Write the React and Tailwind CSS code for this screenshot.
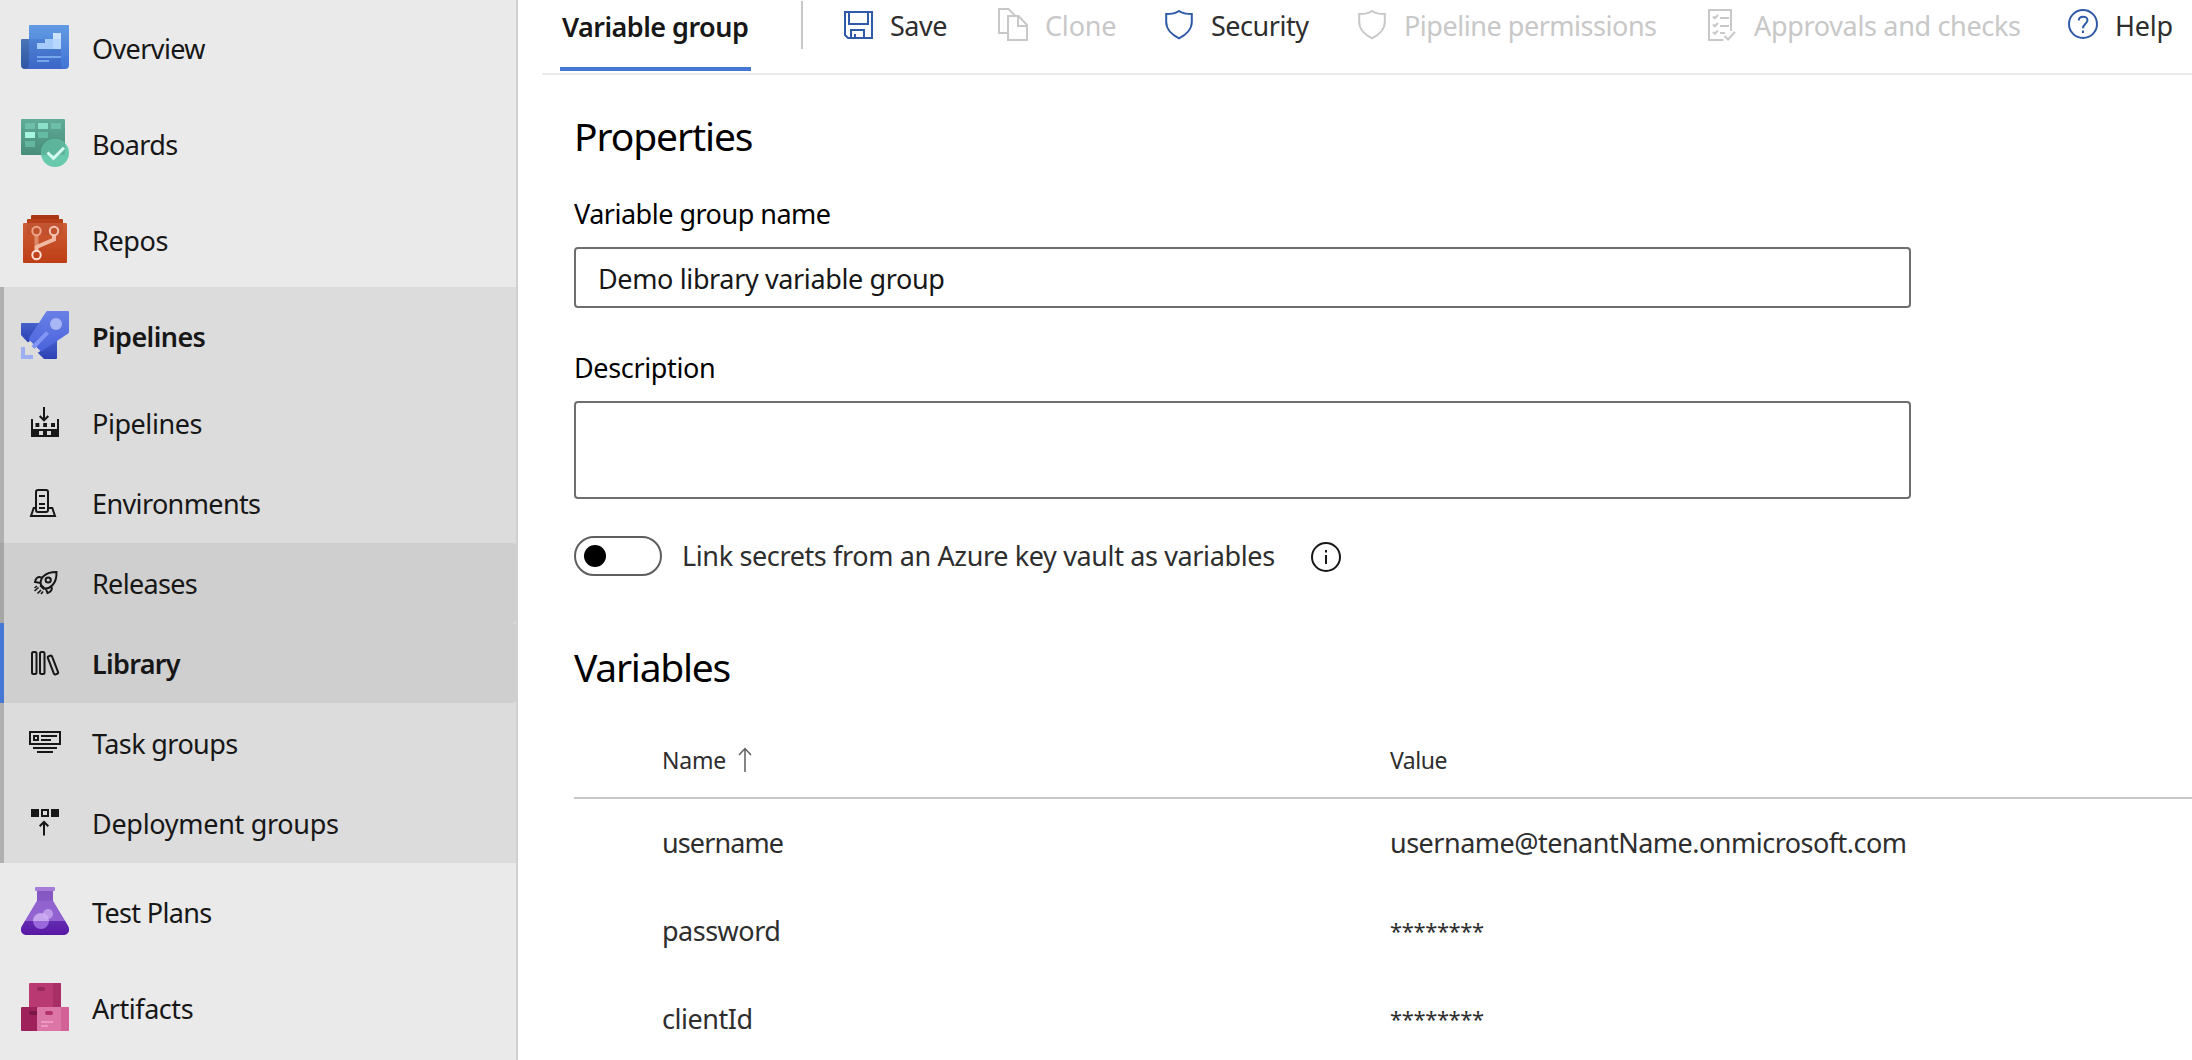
import React from 'react';

/* ---------- Service icons (48 x 48) ---------- */

const Grad = ({ id, from, to }) => (
  <linearGradient id={id} x1="0" y1="0" x2="0" y2="1">
    <stop offset="0" stopColor={from} />
    <stop offset="1" stopColor={to} />
  </linearGradient>
);

const Big = ({ children }) => (
  <svg width="48" height="48" viewBox="0 0 48 48" fill="none" className="shrink-0">
    {children}
  </svg>
);

const OverviewIcon = () => (
  <Big>
    <defs>
      <Grad id="ov1" from="#629be2" to="#3f74d6" />
      <Grad id="ov2" from="#4a75b8" to="#2e55a3" />
      <Grad id="ov3" from="#4d82d2" to="#3c66c8" />
    </defs>
    <path d="M0 17a1 1 0 0 1 1-1h8v26a4 4 0 0 1-4 4H4a4 4 0 0 1-4-4z" fill="url(#ov2)" />
    <path d="M8 3a1 1 0 0 1 1-1h38a1 1 0 0 1 1 1v39a4 4 0 0 1-4 4H4a4 4 0 0 0 4-4z" fill="url(#ov1)" />
    <path d="M8 16h32v26a4 4 0 0 0 4 4H4a4 4 0 0 0 4-4z" fill="url(#ov3)" />
    <path d="M16 20h8v-4h8v10H16z" fill="#a5cbfb" />
    <path d="M32 10h8v16h-8z" fill="#b8d7ff" />
    <path d="M32 10h8v6h-8z" fill="#cde2ff" />
    <path d="M16 33h24v2H16zM16 37h12v2H16z" fill="#76a6ec" />
  </Big>
);

const BoardsIcon = () => (
  <Big>
    <defs>
      <Grad id="bo1" from="#60ab99" to="#488d79" />
    </defs>
    <rect width="44" height="36" rx="1" fill="url(#bo1)" />
    <path d="M4 4h10v6H4zM30 4h10v6H30z" fill="#6cc0a9" />
    <path d="M17 4h10v6H17z" fill="#8ce0c9" />
    <path d="M4 13h10v6H4z" fill="#a5f6e0" />
    <path d="M17 13h10v6H17z" fill="#65baa2" />
    <path d="M4 22h10v6H4z" fill="#62b69e" />
    <circle cx="34" cy="34" r="14" fill="#68c9ad" />
    <path d="M44 24.2V35a1 1 0 0 1-1 1H20.2A14 14 0 0 1 44 24.2z" fill="#5cb59b" />
    <path d="M26.5 33.5l6 5.8L43 28.8" stroke="#d5fbf0" strokeWidth="3" />
  </Big>
);

const ReposIcon = () => (
  <Big>
    <defs>
      <Grad id="re1" from="#cd5f38" to="#be3d15" />
    </defs>
    <rect x="10" width="28" height="10" rx="1" fill="#a93713" />
    <rect x="6" y="4" width="36" height="10" rx="1" fill="#b5401a" />
    <rect x="2" y="8" width="44" height="40" rx="1" fill="url(#re1)" />
    <path d="M6 8h36v12H6z" fill="#b94a2c" fillOpacity=".45" />
    <path d="M15.5 20v10" stroke="#dd8a69" strokeWidth="4" />
    <path d="M33 20v4.500L15.5 32v4.500" stroke="#f1b9a2" strokeWidth="4" />
    <circle cx="15.5" cy="16" r="4.2" stroke="#eda488" strokeWidth="2" />
    <circle cx="33" cy="16" r="4.2" stroke="#f5c6b4" strokeWidth="2" />
    <circle cx="15.5" cy="40" r="4.2" stroke="#fde0d5" strokeWidth="2" />
  </Big>
);

const PipelinesIcon = () => (
  <Big>
    <defs>
      <Grad id="pi1" from="#6980e6" to="#4a63dc" />
      <Grad id="pi2" from="#4561cb" to="#2d40b4" />
    </defs>
    <path d="M1 12h18L8 31H6.5L0 24V13a1 1 0 0 1 1-1z" fill="url(#pi2)" />
    <path d="M36 28v19a1 1 0 0 1-1 1H23l-7-7 2-3z" fill="url(#pi2)" />
    <path d="M26 0h21a1 1 0 0 1 1 1v20a2 2 0 0 1-.8 1.5L21 40h-2L8 29v-2L25 1z" fill="url(#pi1)" />
    <path d="M8.5 29.5l11 10.5-3 2-1.5-2 1-1.5-2-.5-2-1-1.5-1 .5-2-2-.5.5-2z" fill="#dcdcdc" />
    <circle cx="35" cy="13" r="6" fill="#a8b6f4" />
    <path d="M26.5 21.5L12 36.5" stroke="#8195f2" strokeWidth="4" />
    <path d="M2 36v10h10" stroke="#9daff1" strokeWidth="4" />
  </Big>
);

const TestPlansIcon = () => (
  <Big>
    <defs>
      <Grad id="te1" from="#8456c2" to="#8f63cd" />
      <Grad id="te2" from="#632bb2" to="#5817a3" />
    </defs>
    <path d="M16 4h16v10l15 25c2.5 4.5.2 9-5 9H6c-5.2 0-7.5-4.5-5-9l15-25z" fill="url(#te1)" />
    <path d="M16 14h16l12 20H4z" fill="#9263d0" />
    <path d="M4 34h40l3 5c2.5 4.5.2 9-5 9H6c-5.2 0-7.5-4.5-5-9z" fill="url(#te2)" />
    <rect x="14" width="20" height="4" rx="1" fill="#a67cd9" />
    <circle cx="20" cy="34" r="8" fill="#9a68dc" />
    <path d="M12 34a8 8 0 0 1 16 0z" fill="#c6a5ef" />
    <circle cx="27" cy="27" r="5" fill="#d0b2f3" fillOpacity=".7" />
  </Big>
);

const ArtifactsIcon = () => (
  <Big>
    <rect x="8" width="32" height="26" rx="1" fill="#b93a72" />
    <path d="M32 0h7a1 1 0 0 1 1 1v23h-8z" fill="#a82f66" />
    <rect y="24" width="20" height="24" rx="1" fill="#9f215b" />
    <rect x="16" y="24" width="32" height="24" rx="1" fill="#db76a6" />
    <path d="M40 24h7a1 1 0 0 1 1 1v22a1 1 0 0 1-1 1h-7z" fill="#d16197" />
    <rect x="16" y="4" width="8" height="4" rx="2" fill="#98285a" />
    <path d="M10 28h6v4h-6a2 2 0 0 1 0-4z" fill="#7a1745" />
    <rect x="24" y="28" width="8" height="4" rx="2" fill="#b4326c" />
    <path d="M20 38h12v2H20zM20 42h7v2h-7z" fill="#ec98c0" />
  </Big>
);

/* ---------- Sub-navigation icons (32 x 32) ---------- */

const Small = ({ children }) => (
  <svg width="32" height="32" viewBox="0 0 32 32" fill="none" stroke="#171717" strokeWidth="2" className="shrink-0">
    {children}
  </svg>
);

const BuildIcon = () => (
  <Small>
    <path d="M15 0v13M10.7 9l4.3 4.3L19.3 9" />
    <path
      d="M2 12h2v10h24V12h2v18H2zM10 24v4h4v-4zM18 24v4h4v-4zM6.500 16h3.800v4H6.500zM14.200 16h3.800v4h-3.800zM22 16h4v4h-4z"
      fill="#171717"
      fillRule="evenodd"
      stroke="none"
    />
  </Small>
);

const EnvironmentsIcon = () => (
  <Small>
    <rect x="7" y="3" width="12" height="22" rx="2" />
    <path d="M10 9h6M10 17h6M10 21h6M7 21H4.700L2 29h24l-2.700-8H19" />
  </Small>
);

const ReleasesIcon = () => (
  <Small>
    <path d="M12 18c-1.500-5 2-13 15.500-13C28 18 20 22 15.500 21.500zM12.500 10.500c-3.500-1.500-6 .5-6.500 4.500l5.500 1M22.500 19.500c1 3-.5 5.500-4 6.500L16.500 21" />
    <circle cx="19.200" cy="13" r="2.600" />
    <path d="M11 18.500l4 4M9.500 20.500L5.500 24M12 23l-3.500 3.500M8 19l-2.500 2M14 24.500L12 27" strokeWidth="1.600" />
  </Small>
);

const LibraryIcon = () => (
  <Small>
    <rect x="3" y="5" width="4.500" height="22" rx="1.500" />
    <rect x="11" y="5" width="4.500" height="22" rx="1.500" />
    <rect x="21.700" y="8.300" width="4.500" height="19.400" rx="1.500" transform="rotate(-21 24 18)" />
  </Small>
);

const TaskGroupsIcon = () => (
  <Small>
    <path d="M1 5h30v12H1zM5 9h4v4H5zM12 9h16M12 13h10M4 21h24M8 25h16" />
  </Small>
);

const DeploymentIcon = () => (
  <Small>
    <path d="M2 2h8v8H2zM22 2h8v8h-8z" fill="#171717" stroke="none" />
    <path d="M13 3h6v6h-6zM15 28.500V15M10.700 19.300L15 15l4.300 4.300" />
  </Small>
);

/* ---------- Toolbar icons ---------- */

const Tool = ({ children, color }) => (
  <svg width="32" height="44" viewBox="0 3 32 44" fill="none" stroke={color} strokeWidth="2" className="shrink-0">
    {children}
  </svg>
);

const SaveIcon = () => (
  <Tool color="#2f5aa8">
    <path d="M3 12h27v26H6l-3-3zM7 12v12h19V12M9 38v-8h13v8M13 38v-4" />
  </Tool>
);

const CloneIcon = () => (
  <Tool color="#c8c8c8">
    <path d="M10 33H2V9h9.500l7 7M11 16h10.500l8.500 9v15H11zM21 16.500V26h9" />
  </Tool>
);

const ShieldIcon = ({ color }) => (
  <Tool color={color}>
    <path d="M16 11c-3 2-6 3-12.800 3v8c0 7 6 13 12.800 16.300 6.800-3.300 12.800-9.300 12.800-16.300v-8c-6.800 0-9.800-1-12.800-3z" />
  </Tool>
);

const ChecksIcon = () => (
  <Tool color="#c8c8c8">
    <path d="M17.500 40H3V10h22v21M14 18h9M14 26h9M14 33h5" />
    <path d="M7 16.500l1.800 1.800L12 15M7 24.500l1.800 1.800L12 23M7 32l1.800 1.800L12 30.500M18.500 36l3.500 3.500L29 32" />
  </Tool>
);

const HelpIcon = () => (
  <Tool color="#2f5aa8">
    <circle cx="16" cy="24" r="14" />
    <path d="M11.800 20.500c0-5 8.700-5 8.700-.3 0 3.500-4.500 3.600-4.500 8M16 30.500v2.500" />
  </Tool>
);

/* ---------- Sidebar ---------- */

const Hub = ({ icon: Icon, label, track, bold }) => (
  <div className="flex h-24 items-center">
    <Icon />
    <span className={`ml-[23px] pt-[3px] ${track} ${bold ? 'font-semibold' : ''}`}>{label}</span>
  </div>
);

const SubItem = ({ icon: Icon, label, track, state }) => (
  <div
    className={`flex h-20 items-center border-l-4 pl-[25px] ${
      state === 'selected'
        ? 'rounded-r-[4px] border-[#4577d4] bg-[#cfcfcf] font-semibold'
        : state === 'hover'
          ? 'rounded-r-[4px] border-[#a6a6a6] bg-[#cfcfcf]'
          : 'border-[#b0b0b0]'
    }`}
  >
    <Icon />
    <span className={`ml-[31px] pt-[2px] ${track}`}>{label}</span>
  </div>
);

const Sidebar = () => (
  <nav className="w-[518px] shrink-0 border-r-2 border-[#d0d0d0] bg-[#eaeaea] text-[#171717]">
    <div className="-mt-px pl-[21px]">
      <Hub icon={OverviewIcon} label="Overview" track="tracking-[-0.6px]" />
      <Hub icon={BoardsIcon} label="Boards" track="tracking-[-0.62px]" />
      <Hub icon={ReposIcon} label="Repos" track="tracking-[-0.35px]" />
    </div>
    <div className="bg-[#dcdcdc]">
      <div className="border-l-4 border-[#b0b0b0] pl-[17px]">
        <Hub icon={PipelinesIcon} label="Pipelines" track="tracking-[-0.58px]" bold />
      </div>
      <SubItem icon={BuildIcon} label="Pipelines" track="tracking-[-0.44px]" />
      <SubItem icon={EnvironmentsIcon} label="Environments" track="tracking-[-0.62px]" />
      <SubItem icon={ReleasesIcon} label="Releases" track="tracking-[-0.67px]" state="hover" />
      <SubItem icon={LibraryIcon} label="Library" track="tracking-[-0.7px]" state="selected" />
      <SubItem icon={TaskGroupsIcon} label="Task groups" track="tracking-[-0.6px]" />
      <SubItem icon={DeploymentIcon} label="Deployment groups" track="tracking-[-0.3px]" />
    </div>
    <div className="pl-[21px]">
      <Hub icon={TestPlansIcon} label="Test Plans" track="tracking-[-0.66px]" />
      <Hub icon={ArtifactsIcon} label="Artifacts" track="tracking-[-0.45px]" />
    </div>
  </nav>
);

/* ---------- Main area ---------- */

const Action = ({ icon, label, className, disabled }) => (
  <button className={`flex h-[50px] shrink-0 items-center whitespace-nowrap ${disabled ? 'text-[#c8c8c8]' : 'text-[#2e2e2e]'} ${className}`}>
    {icon}
    <span className="ml-4 pt-[2px]">{label}</span>
  </button>
);

const Header = () => (
  <header className="flex h-[75px] items-start border-b-2 border-[#eaeaea] pl-[18px]">
    <div className="h-[71px] w-[191px] shrink-0 border-b-4 border-[#4577d4] pl-[2px] text-[#171717]">
      <span className="block whitespace-nowrap font-semibold leading-[53px] tracking-[-0.53px]">Variable group</span>
    </div>
    <div className="ml-[50px] mt-px h-12 w-[2px] shrink-0 bg-[#c8c8c8]" />
    <div className="ml-[39px] flex">
      <Action icon={<SaveIcon />} label="Save" className="w-[155px] tracking-[-0.5px]" />
      <Action icon={<CloneIcon />} label="Clone" disabled className="w-[166px] tracking-[-0.2px]" />
      <Action icon={<ShieldIcon color="#2f5aa8" />} label="Security" className="w-[193px] tracking-[-0.48px]" />
      <Action icon={<ShieldIcon color="#c8c8c8" />} label="Pipeline permissions" disabled className="w-[350px] tracking-[-0.47px]" />
      <Action icon={<ChecksIcon />} label="Approvals and checks" disabled className="w-[361px] tracking-[-0.33px]" />
      <Action icon={<HelpIcon />} label="Help" className="tracking-[-0.2px]" />
    </div>
  </header>
);

const Row = ({ name, value, track }) => (
  <div className="flex h-[88px] items-center">
    <div className={`w-[728px] ${track}`}>{name}</div>
    {value ? (
      <div className="tracking-[-0.51px]">{value}</div>
    ) : (
      <div className="pb-[3px] text-[22px] tracking-[-0.4px]">********</div>
    )}
  </div>
);

export default function App() {
  return (
    <div className="flex h-[1060px] w-[2192px] overflow-hidden bg-white font-['Noto_Sans','Open_Sans',sans-serif] text-[27px] leading-[40px]">
      <Sidebar />
      <main className="ml-6 w-[1650px] shrink-0">
        <Header />
        <div className="ml-8 text-black">
          <h1 className="mt-[33px] text-[39px] leading-[56px] tracking-[-1.1px]">Properties</h1>
          <label className="mt-[30px] block tracking-[-0.5px]">Variable group name</label>
          <div className="mt-[13px] flex h-[61px] w-[1337px] items-center rounded-[4px] border-2 border-[#6e6e6e] pl-[22px] pt-[2px] tracking-[-0.37px] text-[#171717]">
            Demo library variable group
          </div>
          <label className="mt-10 block tracking-[-0.35px]">Description</label>
          <div className="mt-[13px] h-[98px] w-[1337px] rounded-[4px] border-2 border-[#6e6e6e]" />
          <div className="mt-[37px] flex h-10 items-center text-[#2e2e2e]">
            <div className="flex h-10 w-[88px] items-center rounded-full border-2 border-[#5e5e5e] pl-2">
              <div className="size-[22px] rounded-full bg-black" />
            </div>
            <span className="ml-5 w-[629px] whitespace-nowrap tracking-[-0.37px]">
              Link secrets from an Azure key vault as variables
            </span>
            <svg width="30" height="30" viewBox="0 0 30 30" fill="none" stroke="#171717" strokeWidth="2" className="mt-[2px]">
              <circle cx="15" cy="15" r="14" />
              <path d="M15 13v9M15 8v2.500" />
            </svg>
          </div>
          <h2 className="mt-[63px] text-[39px] leading-[56px] tracking-[-1.25px]">Variables</h2>
          <div className="mt-[28px] flex h-[76px] items-center border-b-2 border-[#c8c8c8] pl-[88px] text-[23px] text-[#2e2e2e]">
            <div className="flex w-[728px] items-center tracking-[-0.23px]">
              Name
              <svg width="14" height="26" viewBox="0 0 14 26" fill="none" stroke="#5e5e5e" strokeWidth="1.500" className="ml-3">
                <path d="M7 25V1.500M1 8l6-6.500L13 8" />
              </svg>
            </div>
            <div className="tracking-[-0.5px]">Value</div>
          </div>
          <div className="pl-[88px] text-[#2e2e2e]">
            <Row name="username" value="username@tenantName.onmicrosoft.com" track="tracking-[-0.9px]" />
            <Row name="password" track="tracking-[-0.5px]" />
            <Row name="clientId" track="tracking-[-0.45px]" />
          </div>
        </div>
      </main>
    </div>
  );
}
